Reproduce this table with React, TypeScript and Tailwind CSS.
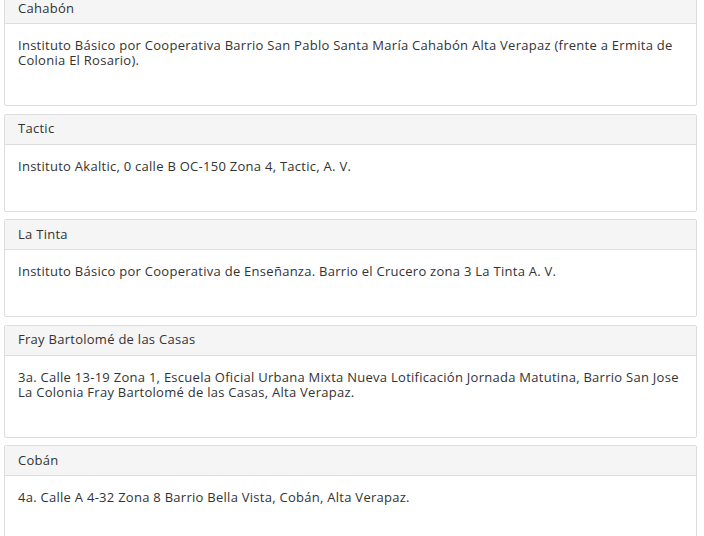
const sedes = [
  {
    nombre: "Cahabón",
    direccion:
      "Instituto Básico por Cooperativa Barrio San Pablo Santa María Cahabón Alta Verapaz (frente a Ermita de Colonia El Rosario).",
  },
  { nombre: "Tactic", direccion: "Instituto Akaltic, 0 calle B OC-150 Zona 4, Tactic, A. V." },
  {
    nombre: "La Tinta",
    direccion: "Instituto Básico por Cooperativa de Enseñanza. Barrio el Crucero zona 3 La Tinta A. V.",
  },
  {
    nombre: "Fray Bartolomé de las Casas",
    direccion:
      "3a. Calle 13-19 Zona 1, Escuela Oficial Urbana Mixta Nueva Lotificación Jornada Matutina, Barrio San Jose La Colonia Fray Bartolomé de las Casas, Alta Verapaz.",
  },
  { nombre: "Cobán", direccion: "4a. Calle A 4-32 Zona 8 Barrio Bella Vista, Cobán, Alta Verapaz." },
];

export default function App() {
  return (
    <div className="h-[536px] w-[704px] overflow-hidden bg-white font-['Open_Sans',sans-serif] text-[13px] tracking-[0.27px] text-[#333]">
      {/* pagina desplazada: el primer panel queda cortado arriba */}
      <div className="-mt-[7px] ml-[4px] flex w-[693px] flex-col gap-[7.5px]">
        {sedes.map((s) => (
          <div key={s.nombre} className="rounded-[2px] border border-[#dddddd] bg-white">
            <div className="flex h-[30px] items-center border-b border-[#dddddd] bg-[#f5f5f5] px-[13px]">
              {s.nombre}
            </div>
            <div className="px-[13px] pt-[14px] pb-[37px] leading-[15px]">{s.direccion}</div>
          </div>
        ))}
      </div>
    </div>
  );
}
